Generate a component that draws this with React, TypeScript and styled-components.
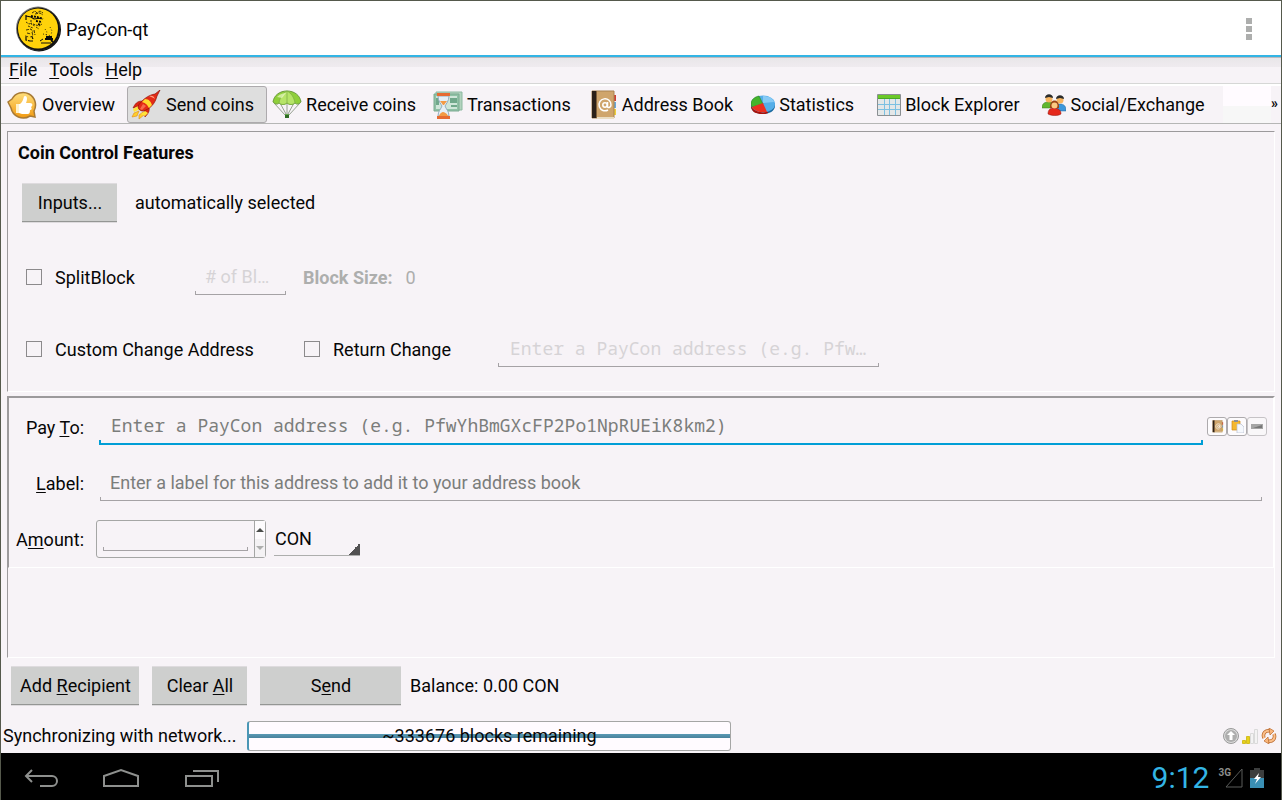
import React from "react";
import styled, { createGlobalStyle, css } from "styled-components";

const sans = `Roboto, "Liberation Sans", sans-serif`;
const mono = `"Noto Sans Mono", "DejaVu Sans Mono", monospace`;

const GlobalStyle = createGlobalStyle`
  *, *::before, *::after { box-sizing: border-box; }
  body { margin: 0; background: #f7f3f7; }
  button, input, select { font: inherit; color: inherit; margin: 0; border: 0; border-radius: 0; background: none; padding: 0; outline: 0; }
  svg { display: block; flex: none; }
`;

const Window = styled.div`
  display: flex;
  flex-direction: column;
  min-height: 100vh;
  border: 1px solid #55594c;
  border-bottom: 0;
  background: #f7f3f7;
  color: #060606;
  font: 18px/24px ${sans};
  white-space: nowrap;
`;

const TitleBar = styled.header`
  display: flex;
  align-items: center;
  height: 56px;
  padding: 2px 25px 0 13px;
  background: #fff;
  border-bottom: 2px solid #33b5e5;
`;

const AppTitle = styled.h1`
  flex: 1;
  margin: 0 0 0 2px;
  padding-top: 2px;
  font-size: 18px;
  font-weight: 400;
`;

const OverflowButton = styled.button`
  padding: 0 4px;
`;

const MenuBar = styled.nav`
  display: flex;
  gap: 12px;
  height: 27px;
  padding: 0 8px;
  border-bottom: 1px solid #d6d7d6;
  background: linear-gradient(#bdbabd 0 1px, #e9e6e9 1px, #efebef 10px, #f7f3f7 10px);
`;

const MenuItem = styled.button``;

const Key = styled.span`
  text-decoration: underline;
  text-decoration-thickness: 1px;
  text-underline-offset: 2px;
  text-decoration-skip-ink: none;
`;

const ToolBar = styled.div`
  display: flex;
  height: 40px;
  padding-left: 2px;
  border-top: 2px solid #fff;
  border-bottom: 1px solid #b5b6b5;
`;

const ToolButton = styled.button<{ $checked?: boolean; $slot?: number }>`
  display: flex;
  align-items: center;
  height: 37px;
  padding: 0 ${(p) => (p.$checked ? 12 : 11)}px 0 3px;
  border: 1px solid ${(p) => (p.$checked ? "#adaaad" : "transparent")};
  border-radius: 3px;
  background: ${(p) => (p.$checked ? "#dedede" : "transparent")};
  > span:first-child {
    display: flex;
    justify-content: flex-end;
    width: ${(p) => p.$slot ?? 35}px;
    padding-right: 4px;
  }
`;

const ToolFiller = styled.div`
  flex: 1;
  margin-left: 6px;
  background: linear-gradient(#fffbff 0 20px, #f7f7f7 20px);
`;

const MoreTools = styled.button`
  width: 10px;
  padding-bottom: 3px;
  font-size: 14px;
  font-weight: 700;
  text-align: left;
`;

const Content = styled.main`
  display: flex;
  flex: 1;
  flex-direction: column;
  padding: 7px 6px 0;
`;

const sunken = css`
  border: 1px solid #fff;
  border-top-color: #9c9a9c;
  border-left-color: #9c9a9c;
`;

const CoinControl = styled.section`
  ${sunken}
  display: flex;
  flex-direction: column;
  padding: 9px 10px 24px;
`;

const SectionTitle = styled.h2`
  margin: 0 0 18px;
  font-size: 18px;
  font-weight: 700;
`;

const InputsRow = styled.div`
  display: flex;
  align-items: center;
  gap: 18px;
  margin-bottom: 1px;
  padding-left: 4px;
`;

const OptionRow = styled.div`
  display: flex;
  align-items: center;
  height: 36px;
  margin-top: 36px;
  padding-left: 8px;
`;

const PushButton = styled.button<{ $width: number }>`
  min-width: ${(p) => p.$width}px;
  height: 39px;
  padding: 1px 0 0 1px;
  border-top: 1px solid #dedbde;
  border-bottom: 1px solid #949694;
  background: #cecfce;
  box-shadow: 0 1px #dedbde;
`;

const Check = styled.label<{ $width: number }>`
  display: flex;
  align-items: center;
  min-width: ${(p) => p.$width}px;
  > span { padding: 2px 0 0 13px; }
`;

const CheckBox = styled.input`
  appearance: none;
  width: 16px;
  height: 16px;
  border: 1px solid #8c8a8c;
  &:checked { background: #33b5e5; }
`;

const LineField = styled.input<{ $active?: boolean; $mono?: boolean; $muted?: boolean; $width?: number }>`
  --line: ${(p) => (p.$active ? "#009ed6" : "#a5a2a5")};
  --tick: ${(p) => (p.$active ? 2 : 1)}px;
  ${(p) => (p.$width ? `width: ${p.$width}px;` : "flex: 1; min-width: 0;")}
  height: 36px;
  padding: 0 10px ${(p) => (p.$mono ? "2px 12px" : "0 10px")};
  border-bottom: var(--tick) solid var(--line);
  background:
    linear-gradient(var(--line) 0 0) left bottom / var(--tick) 3px no-repeat,
    linear-gradient(var(--line) 0 0) right bottom / var(--tick) 3px no-repeat;
  font-family: ${(p) => (p.$mono ? mono : sans)};
  text-overflow: ellipsis;
  &::placeholder { color: ${(p) => (p.$muted ? "#d6d3d6" : "#7b7d7b")}; opacity: 1; }
`;

const BlockSize = styled.div`
  display: flex;
  gap: 13px;
  margin-left: 17px;
  padding-top: 2px;
  color: #adaead;
`;

const Recipients = styled.section`
  ${sunken}
  flex: 1;
  margin-top: 4px;
`;

const Recipient = styled.form`
  ${sunken}
  display: grid;
  grid-template-columns: 75px 1fr;
  grid-template-rows: repeat(3, 36px);
  gap: 20px 12px;
  align-items: center;
  padding: 11px 6px 10px 0;
`;

const FieldLabel = styled.label`
  padding-top: 1px;
  text-align: right;
`;

const FieldCell = styled.div<{ $inset?: boolean }>`
  display: flex;
  padding: 0 ${(p) => (p.$inset ? "5px 0 4px" : "0 0 3px")};
`;

const EntryTools = styled.div`
  display: flex;
  align-items: center;
  padding: 0 0 2px 4px;
`;

const EntryTool = styled.button`
  display: grid;
  place-items: center;
  width: 20px;
  height: 19px;
  border: 1px solid #adaaad;
  border-radius: 3px;
  background: #fdfbfd;
  &:disabled { border-color: #c6c3c6; background: #f9f7f9; }
`;

const AmountRow = styled.div`
  display: flex;
  gap: 8px;
`;

const SpinBox = styled.div`
  display: flex;
  width: 170px;
  height: 38px;
  border: 1px solid #a5a6a5;
  border-radius: 3px;
  > input { margin: 0 6px; height: 30px; }
`;

const Steppers = styled.div`
  display: flex;
  flex-direction: column;
  width: 11px;
  border-left: 1px solid #a5a6a5;
`;

const Stepper = styled.button`
  display: flex;
  flex: 1;
  align-items: center;
  padding-left: 1px;
  background: #fdfbfd;
  color: #4a4d4a;
  &:disabled { background: #f4f2f4; color: #adaead; }
`;

const UnitSelect = styled.select`
  appearance: none;
  width: 86px;
  height: 36px;
  padding: 2px 0 0 1px;
  border-bottom: 1px solid #adaead;
  background: linear-gradient(135deg, transparent 50%, #525152 50%) right bottom / 13px 13px no-repeat border-box;
`;

const Actions = styled.div`
  display: flex;
  align-items: center;
  gap: 13px;
  padding: 8px 4px 0;
`;

const Balance = styled.span`
  margin-left: -4px;
`;

const StatusBar = styled.footer`
  display: flex;
  align-items: center;
  height: 34px;
  margin-top: 14px;
  padding: 0 4px 0 2px;
`;

const SyncText = styled.span`
  min-width: 244px;
`;

const Progress = styled.div`
  width: 484px;
  height: 30px;
  border: 1px solid #a5a6a5;
  border-left: 2px solid #4a96b5;
  border-radius: 3px;
  background: linear-gradient(transparent 12px, #5a9ab5 12px, #4a829c 16px, transparent 16px) #fffbff;
  line-height: 28px;
  text-align: center;
`;

const StatusIcons = styled.div`
  display: flex;
  gap: 3px;
  margin-left: auto;
`;

const SystemBar = styled.div`
  display: flex;
  align-items: center;
  height: 47px;
  padding: 2px 17px 0 23px;
  background: #000;
`;

const NavButtons = styled.div`
  display: flex;
  flex: 1;
  gap: 43px;
  padding-top: 2px;
`;

const Clock = styled.time`
  margin-right: 9px;
  color: #33b5e5;
  font-size: 30px;
  line-height: 44px;
`;

const Network = styled.span`
  display: flex;
  margin-right: 7px;
  color: #8c8e8c;
  font-size: 10px;
  font-weight: 700;
  line-height: 10px;
  > svg { margin-left: -6px; }
`;

const Logo = () => (
  <svg width="50" height="48" viewBox="0 0 50 48" aria-hidden="true">
    <circle cx="25" cy="24.500" r="22" fill="#111" />
    <circle cx="24" cy="23.500" r="22" fill="#777" />
    <circle cx="24.500" cy="24" r="21.500" fill="#111" />
    <circle cx="24" cy="23.500" r="20" fill="#ffd20a" />
    <g stroke="#0a0a0a" fill="none">
      <path strokeWidth=".8" strokeDasharray="3 1" d="M18 8l3-2 2 2 3-2 3 2M21 9l5-1 3 2" />
      <path strokeWidth="1.200" d="M12 10v5M12 11l5 1 3 2 8-1" />
      <path strokeWidth="1.800" strokeDasharray="2 1" d="M17 11l6 1 6 2M22 16l6 1M24 19l3 1" />
      <path strokeWidth=".8" strokeDasharray="2 1" d="M12 17l3 2 3-1M17 15v4l4 2M19 19l6 2 3-2M14 21l5 2M22 22l3 2" />
      <path strokeWidth=".8" strokeDasharray="3 1" d="M12 25l5-1 2 3M13 28l4 1M18 27l1 4-3 1M11 31l4 1M20 25l1 5" />
      <path strokeWidth="1.200" strokeDasharray="4 1" d="M12 32v3l4 1M15 36h5M18 32l1 2" />
      <path strokeWidth=".8" strokeDasharray="1 2" d="M31 24l2 3-1 3M36 22l2 4-1 4M29 29l9 2" />
      <path strokeWidth="1.800" d="M32 32h6M31 34h8M37 35l2 2" />
      <path strokeWidth="1" d="M26 36l3-2M27 38h10" />
    </g>
  </svg>
);

const OverviewIcon = () => (
  <svg width="31" height="30" viewBox="0 0 31 30" aria-hidden="true">
    <defs>
      <linearGradient id="ov" x1="0" y1="0" x2="0" y2="1"><stop offset="0" stopColor="#ffdf7c" /><stop offset="1" stopColor="#f29a12" /></linearGradient>
    </defs>
    <path d="M1 12l4-3a12.500 12.500 0 1 1 22 12l1 6-5-1A12.500 12.500 0 0 1 4 18z" fill="url(#ov)" stroke="#a87a35" strokeWidth="1.500" />
    <path d="M9 14h4c4-3 3-8 5-8 3 0 2 5 1 7h4c3 0 3 3 1 4 1 1 1 3-1 3 0 3-1 4-2 4h-6l-3-1H9z" fill="#fff" />
    <path d="M9 14h3v9H9z" fill="#fff1c8" />
  </svg>
);

const RocketIcon = () => (
  <svg width="31" height="30" viewBox="0 0 31 30" aria-hidden="true">
    <path d="M8 21l-5 2-2 4 5-1zM12 22l-4 3v4l5-4z" fill="#ffce2b" stroke="#e08a1a" strokeWidth=".6" />
    <path d="M11 11c-5 0-7 3-9 7l6-2zM18 17c1 4-1 7-4 10l-1-6z" fill="#dd2412" stroke="#8e1208" strokeWidth=".6" />
    <path d="M2 19l5-3 2 3-6 3zM10 24l4-3 3 2-3 3z" fill="#ffe33a" />
    <path d="M29 0L24 4c-7 1-13 6-17 12 0 3 2 5 5 5 7-2 12-7 14-15z" fill="#e42a16" stroke="#8e1208" strokeWidth=".7" />
    <path d="M14 9c4 0 6 3 7 6l-3 3c-2-4-4-5-7-6z" fill="#ffd92e" />
    <path d="M18 6c3-1 5 0 6 3-1-1-4-2-6-3z" fill="#ff9d7c" />
    <path d="M12 14l3 2-4 4-2-1z" fill="#f76a4c" />
  </svg>
);

const ParachuteIcon = () => (
  <svg width="30" height="30" viewBox="0 0 30 30" aria-hidden="true">
    <path d="M2 13l11 12M8 13l6 11M15 14v11M22 13l-6 11M28 13L17 25" stroke="#97a191" fill="none" />
    <path d="M1 12C2 5 8 1 15 1s13 4 14 11c-2 2-4 3-6 1-3 2-5 2-8 0-3 2-5 2-8 0-2 2-4 1-6-1z" fill="#8fcf3a" stroke="#6b9a3c" />
    <path d="M7 13C8 7 11 3 15 1c4 2 7 6 8 12-3 2-5 2-8 0-3 2-5 2-8 0z" fill="#b6e468" stroke="#79aa42" strokeWidth=".7" />
    <path d="M15 1v12" stroke="#79aa42" strokeWidth=".7" />
    <path d="M5 7c3-3 6-4 9-4l-4 5z" fill="#eaf9c4" opacity=".7" />
    <path d="M13 24h4v4h-4z" fill="#2f6b24" /><path d="M13 24h4v1h-4z" fill="#62a84c" />
  </svg>
);

const TransactionsIcon = () => (
  <svg width="30" height="30" viewBox="0 0 30 30" aria-hidden="true">
    <path d="M3 2h26v18H3z" fill="#b2d3be" stroke="#8db9a1" />
    <path d="M1 4h25v17H1z" fill="#8fc1a5" stroke="#7cab92" />
    <path d="M3 6h21v13H3z" fill="#cfe6d9" />
    <path d="M17 8h7v5h-7zM3 8h3v7H3zM18 15h6v2h-6z" fill="#70a88b" />
    <path d="M5 6h11c0 5-3 8-4 10 1 3 4 5 4 10H5c0-5 3-7 4-10-1-2-4-5-4-10z" fill="#e5eff7" stroke="#93acbc" />
    <path d="M4 3h13v3H4z" fill="#e66b32" /><path d="M4 26h13v3H4z" fill="#e66b32" />
    <path d="M7 11h7l-3 4h-1zM6 26c1-3 3-4 4-4s4 1 5 4z" fill="#f39a45" />
  </svg>
);

const BookIcon = ({ size = 30 }: { size?: number }) => (
  <svg width={size} height={size} viewBox="0 0 30 30" aria-hidden="true">
    <path d="M25 5h3v6h-3z" fill="#cf3f36" /><path d="M25 12h3v6h-3z" fill="#67a9dd" /><path d="M25 19h3v6h-3z" fill="#efd03b" />
    <path d="M4 1h22v27H4z" fill="#cfa56c" stroke="#a98350" />
    <path d="M4 1h4v27H4z" fill="#2c2119" /><path d="M8 1h1v27H8z" fill="#80603a" />
    <path d="M9 27h17v2H9z" fill="#e9dcc2" />
    <circle cx="17" cy="15" r="2.200" fill="none" stroke="#fff" strokeWidth="1.500" />
    <path d="M19.500 12v4.500c0 2 3.500 1 3.500-1.500a6 6 0 1 0-3 5" fill="none" stroke="#fff" strokeWidth="1.500" />
  </svg>
);

const PieIcon = () => (
  <svg width="24" height="22" viewBox="0 0 24 22" aria-hidden="true">
    <path d="M0 9v4c1 5 6 7 12 7s12-3 12-8V9z" fill="#1c6a9f" />
    <path d="M0 13c1 5 5 7 11 7 3 0 4 0 6-1l-1-4-15-3z" fill="#a9120b" />
    <ellipse cx="12" cy="10" rx="12" ry="8.500" fill="#55aee8" />
    <path d="M12 9V2c5 0 10 2 11 6z" fill="#86caf5" />
    <path d="M12 10L8 2C3 3 0 6 0 10l1 3z" fill="#45b42b" stroke="#257618" strokeWidth=".5" />
    <path d="M12 9L1 13c2 4 8 6 15 5z" fill="#ec2f20" />
  </svg>
);

const TableIcon = () => (
  <svg width="24" height="22" viewBox="0 0 24 22" aria-hidden="true">
    <path d="M.5 .5h23v21H.5z" fill="#e4e7e8" stroke="#8a8f92" />
    <path d="M1 1h22v4H1z" fill="#6bc928" /><path d="M1 4h22v1H1z" fill="#4aa828" />
    <path d="M1 10.500h22M1 15.500h22M7.500 5v16M12.500 5v16M18.500 5v16" stroke="#7cc0e2" />
  </svg>
);

const PeopleIcon = () => (
  <svg width="24" height="22" viewBox="0 0 24 22" aria-hidden="true">
    <path d="M0 14c0-5 3-6 7-6s6 2 6 6z" fill="#61b62e" stroke="#38791a" strokeWidth=".5" />
    <path d="M12 17c0-5 2-7 6-7s6 2 6 7z" fill="#3b97dc" stroke="#236297" strokeWidth=".5" />
    <circle cx="7" cy="5" r="3.500" fill="#f7b45e" /><path d="M3 4c0-5 8-5 8 0l-4-1z" fill="#2b2b2b" />
    <circle cx="18" cy="6" r="3.500" fill="#f7b45e" /><path d="M14 5c0-5 8-5 8 0l-4-1z" fill="#2b2b2b" />
    <path d="M6 20c0-4 2-6 6-6s7 2 7 6c-3 2-9 2-13 0z" fill="#e5281b" stroke="#8f140c" strokeWidth=".5" />
    <path d="M8 14c-1-10 10-10 9 0z" fill="#9c4415" /><circle cx="12.500" cy="11.500" r="3" fill="#fbc983" />
  </svg>
);

const PasteIcon = () => (
  <svg width="13" height="13" viewBox="0 0 13 13" aria-hidden="true">
    <path d="M1 1h8v9H1z" fill="#f5b82e" stroke="#cf8b18" strokeWidth=".7" />
    <path d="M3 0h4v2H3z" fill="#8d8f92" />
    <path d="M6 4h4l3 3v6H6z" fill="#f5f8fd" stroke="#b7bfd0" strokeWidth=".7" />
  </svg>
);

const MinusIcon = () => (
  <svg width="12" height="5" viewBox="0 0 12 5" aria-hidden="true">
    <path d="M0 0h12v5H0z" fill="#a5a5a5" /><path d="M2 4L11 1v3z" fill="#777" />
  </svg>
);

const Arrow = ({ down }: { down?: boolean }) => (
  <svg width="8" height="4" viewBox="0 0 8 4" aria-hidden="true">
    <path d={down ? "M0 0h8L4 4z" : "M0 4h8L4 0z"} fill="currentColor" />
  </svg>
);

const EncryptionIcon = () => (
  <svg width="16" height="16" viewBox="0 0 16 16" aria-hidden="true">
    <circle cx="8" cy="8" r="7.500" fill="#dcdcdc" stroke="#9a9a9a" />
    <circle cx="8" cy="8" r="6" fill="#aeaeae" />
    <path d="M8 3l4 4H9.500v5h-3V7H4z" fill="#fff" />
  </svg>
);

const SignalIcon = () => (
  <svg width="16" height="16" viewBox="0 0 16 16" aria-hidden="true">
    <path d="M.5 12.500h3v3h-3zM4.500 8.500h3v7h-3z" fill="#e6d21a" stroke="#d3bd22" />
    <path d="M8.500 5.500h3v10h-3zM12.500 1.500h3v14h-3z" fill="#f3f3f3" stroke="#dadada" />
  </svg>
);

const SyncIcon = () => (
  <svg width="16" height="16" viewBox="0 0 16 16" aria-hidden="true" fill="none">
    <path d="M3 10C1 5 5 2 9 3M13 6c2 5-2 8-6 7" stroke="#b9682c" strokeWidth="3.500" />
    <path d="M3 10C1 5 5 2 9 3M13 6c2 5-2 8-6 7" stroke="#fbc08a" strokeWidth="2" />
    <path d="M8 0l5 3-4 4zM8 16l-5-3 4-4z" fill="#f9b67a" stroke="#b9682c" strokeWidth=".7" />
  </svg>
);

const BackIcon = () => (
  <svg width="35" height="22" viewBox="0 0 35 22" aria-hidden="true" fill="none" stroke="#8e908e" strokeWidth="2">
    <path d="M8 2L2 8l6 6M2 8h26a5 5 0 0 1 0 10H16" />
  </svg>
);

const HomeIcon = () => (
  <svg width="38" height="22" viewBox="0 0 38 22" aria-hidden="true" fill="none" stroke="#8e908e" strokeWidth="2">
    <path d="M2 18V8l17-6 17 6v10z" />
  </svg>
);

const RecentsIcon = () => (
  <svg width="36" height="22" viewBox="0 0 36 22" aria-hidden="true" fill="none" stroke="#8e908e" strokeWidth="2">
    <path d="M3 8h26v10H3zM10 3h25v11" />
  </svg>
);

const BatteryIcon = () => (
  <svg width="14" height="20" viewBox="0 0 14 20" aria-hidden="true">
    <path d="M4 0h6v2h4v8H0V2h4z" fill="#3c3e3e" />
    <path d="M0 10h14v10H0z" fill="#3a8fb4" />
    <path d="M9 5L4 11h3l-2 5 6-7H8z" fill="#fff" />
  </svg>
);

const tools = [
  { name: "Overview", icon: <OverviewIcon /> },
  { name: "Send coins", icon: <RocketIcon />, checked: true },
  { name: "Receive coins", icon: <ParachuteIcon /> },
  { name: "Transactions", icon: <TransactionsIcon /> },
  { name: "Address Book", icon: <BookIcon /> },
  { name: "Statistics", icon: <PieIcon />, slot: 30 },
  { name: "Block Explorer", icon: <TableIcon /> },
  { name: "Social/Exchange", icon: <PeopleIcon /> },
];

export default function App() {
  return (
    <>
      <GlobalStyle />
      <Window>
        <TitleBar>
          <Logo />
          <AppTitle>PayCon-qt</AppTitle>
          <OverflowButton aria-label="More options">
            <svg width="6" height="22" viewBox="0 0 6 22" aria-hidden="true">
              <path d="M0 0h6v6H0zM0 8h6v6H0zM0 16h6v6H0z" fill="#adaead" />
            </svg>
          </OverflowButton>
        </TitleBar>

        <MenuBar>
          <MenuItem><Key>F</Key>ile</MenuItem>
          <MenuItem><Key>T</Key>ools</MenuItem>
          <MenuItem><Key>H</Key>elp</MenuItem>
        </MenuBar>

        <ToolBar role="toolbar">
          {tools.map((t) => (
            <ToolButton key={t.name} $checked={t.checked} $slot={t.slot}>
              <span>{t.icon}</span>
              {t.name}
            </ToolButton>
          ))}
          <ToolFiller />
          <MoreTools aria-label="More tools">»</MoreTools>
        </ToolBar>

        <Content>
          <CoinControl>
            <SectionTitle>Coin Control Features</SectionTitle>
            <InputsRow>
              <PushButton $width={95}>Inputs...</PushButton>
              <span>automatically selected</span>
            </InputsRow>
            <OptionRow>
              <Check $width={169}><CheckBox type="checkbox" /><span>SplitBlock</span></Check>
              <LineField $width={91} $muted disabled placeholder="# of Blocks" aria-label="Number of blocks" />
              <BlockSize><b>Block Size:</b><span>0</span></BlockSize>
            </OptionRow>
            <OptionRow>
              <Check $width={278}><CheckBox type="checkbox" /><span>Custom Change Address</span></Check>
              <Check $width={194}><CheckBox type="checkbox" /><span>Return Change</span></Check>
              <LineField $width={381} $mono $muted disabled aria-label="Change address"
                placeholder="Enter a PayCon address (e.g. PfwYhBmGXcFP2Po1NpRUEiK8km2)" />
            </OptionRow>
          </CoinControl>

          <Recipients>
            <Recipient onSubmit={(e) => e.preventDefault()}>
              <FieldLabel htmlFor="payto">Pay <Key>T</Key>o:</FieldLabel>
              <FieldCell>
                <LineField id="payto" $active $mono placeholder="Enter a PayCon address (e.g. PfwYhBmGXcFP2Po1NpRUEiK8km2)" />
                <EntryTools>
                  <EntryTool type="button" aria-label="Choose from address book"><BookIcon size={13} /></EntryTool>
                  <EntryTool type="button" aria-label="Paste address"><PasteIcon /></EntryTool>
                  <EntryTool type="button" aria-label="Remove recipient" disabled><MinusIcon /></EntryTool>
                </EntryTools>
              </FieldCell>

              <FieldLabel htmlFor="label"><Key>L</Key>abel:</FieldLabel>
              <FieldCell $inset>
                <LineField id="label" placeholder="Enter a label for this address to add it to your address book" />
              </FieldCell>

              <FieldLabel htmlFor="amount">A<Key>m</Key>ount:</FieldLabel>
              <AmountRow>
                <SpinBox>
                  <LineField id="amount" />
                  <Steppers>
                    <Stepper type="button" aria-label="Increase"><Arrow /></Stepper>
                    <Stepper type="button" aria-label="Decrease" disabled><Arrow down /></Stepper>
                  </Steppers>
                </SpinBox>
                <UnitSelect aria-label="Unit"><option>CON</option></UnitSelect>
              </AmountRow>
            </Recipient>
          </Recipients>

          <Actions>
            <PushButton $width={128}>Add <Key>R</Key>ecipient</PushButton>
            <PushButton $width={95}>Clear <Key>A</Key>ll</PushButton>
            <PushButton $width={141}>S<Key>e</Key>nd</PushButton>
            <Balance>Balance: 0.00 CON</Balance>
          </Actions>
        </Content>

        <StatusBar>
          <SyncText>Synchronizing with network...</SyncText>
          <Progress role="progressbar" aria-label="Synchronization">~333676 blocks remaining</Progress>
          <StatusIcons><EncryptionIcon /><SignalIcon /><SyncIcon /></StatusIcons>
        </StatusBar>

        <SystemBar>
          <NavButtons>
            <button aria-label="Back"><BackIcon /></button>
            <button aria-label="Home"><HomeIcon /></button>
            <button aria-label="Recent apps"><RecentsIcon /></button>
          </NavButtons>
          <Clock>9:12</Clock>
          <Network>
            3G
            <svg width="18" height="20" viewBox="0 0 18 20" aria-hidden="true">
              <path d="M1 19L17 1v18z" fill="none" stroke="#5a5c5a" />
            </svg>
          </Network>
          <BatteryIcon />
        </SystemBar>
      </Window>
    </>
  );
}
